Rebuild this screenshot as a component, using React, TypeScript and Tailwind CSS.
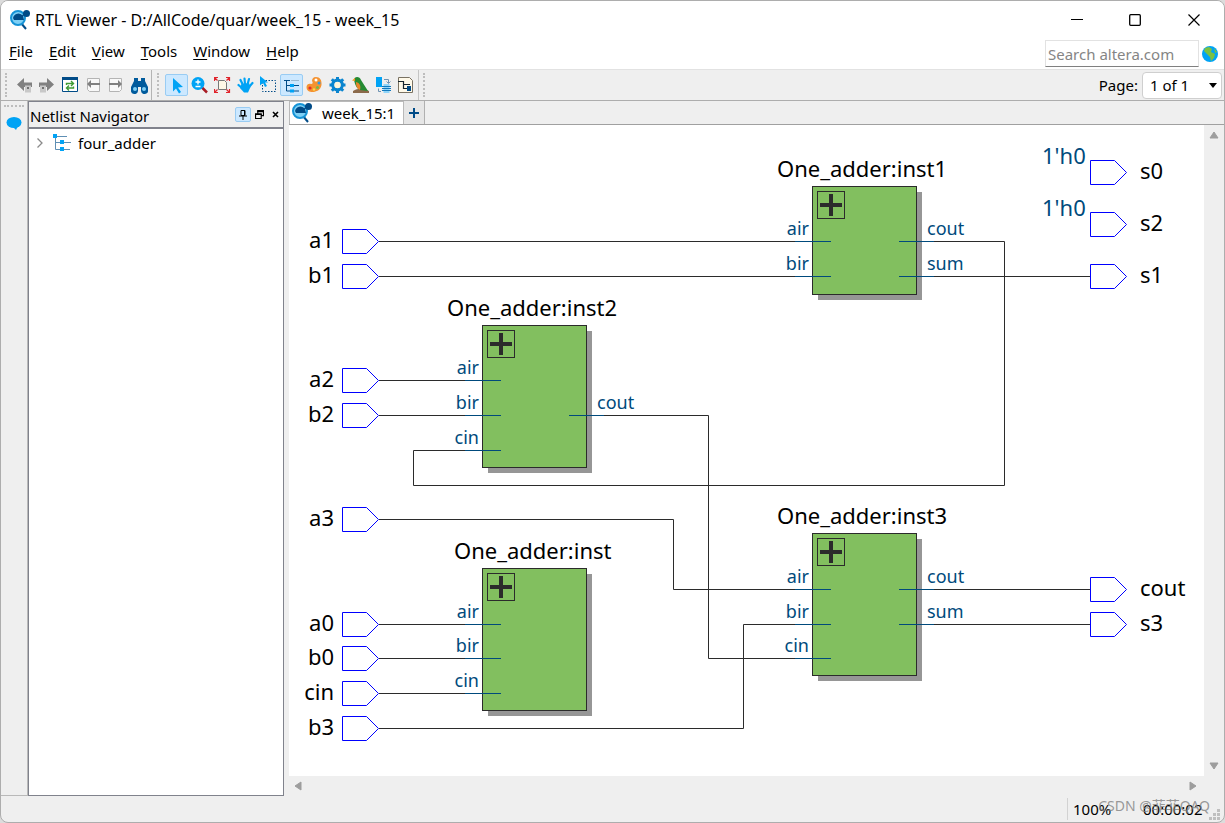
import type { ReactNode } from 'react';

const menus = ['File', 'Edit', 'View', 'Tools', 'Window', 'Help'];

function ViewerLogo() {
  return (
    <svg width="22" height="22" viewBox="0 0 22 22" aria-hidden="true">
      <path d="M12 14l5 6" stroke="#004b87" strokeWidth="2" />
      <circle cx="9" cy="9" r="7" fill="#7fd0f5" stroke="#1593d6" strokeWidth="2" />
      <path d="M4 9a5.500 5.500 0 0 1 10-2l1 4H5z" fill="#004b87" />
      <circle cx="17.500" cy="4.500" r="3.500" fill="#004b87" />
      <path d="M12 8l5-4" stroke="#004b87" strokeWidth="1.500" />
    </svg>
  );
}

function Icon({ children }: { children: ReactNode }) {
  return (
    <svg width="18" height="18" viewBox="0 0 18 18" fill="none" aria-hidden="true" className="shrink-0">
      {children}
    </svg>
  );
}

type Tool = { label: string; active?: boolean; icon: ReactNode };

const navTools: Tool[] = [
  {
    label: 'Back',
    icon: (
      <>
        <path d="M1 8.500L8 2v4.500h8v4.500H8v4z" fill="#808080" />
        <path d="M9 9.500h6v7H9z" fill="#c8c8c8" />
        <path d="M11 11h2v2h-2z" fill="#707070" />
      </>
    ),
  },
  {
    label: 'Forward',
    icon: (
      <>
        <path d="M15 8.500L8 2v4.500H0V11h8v4z" fill="#808080" />
        <path d="M1 9.500h6v7H1z" fill="#c8c8c8" />
        <path d="M3 11h2v2H3z" fill="#707070" />
      </>
    ),
  },
  {
    label: 'Refresh',
    icon: (
      <>
        <path d="M.5 1.500h15v14H.5z" fill="#fff" stroke="#004b87" />
        <path d="M0 1h16v3H0z" fill="#004b87" />
        <path d="M4.500 9V7.500H11M9 5l2.500 2.500L9 10M11.500 10.500V12H5M7 9.500L4.500 12 7 14.500" stroke="#3f9b35" strokeWidth="1.400" />
      </>
    ),
  },
  {
    label: 'Previous page',
    icon: (
      <>
        <path d="M2.500 2.500h12v13h-10l-2-2z" fill="#f8f8f8" stroke="#b4b4b4" />
        <path d="M2 8l4-4v3h9v2H6v3z" fill="#808080" />
      </>
    ),
  },
  {
    label: 'Next page',
    icon: (
      <>
        <path d="M1.500 2.500h12v11l-2 2h-10z" fill="#f8f8f8" stroke="#b4b4b4" />
        <path d="M14 8l-4-4v3H1v2h9v3z" fill="#808080" />
      </>
    ),
  },
  {
    label: 'Find',
    icon: (
      <>
        <path d="M3 2h4v3h3V2h4v3l3 6v3a3 3 0 0 1-7 1v-4H7v4a3 3 0 0 1-7-1v-3l3-6z" fill="#005a9c" />
        <circle cx="4" cy="13" r="2" fill="#7fcff5" />
        <circle cx="13" cy="13" r="2" fill="#7fcff5" />
      </>
    ),
  },
];

const viewTools: Tool[] = [
  { label: 'Select', active: true, icon: <path d="M5 2l10 9-5 .5 3 4.500-2 1.500-3-5-3 3z" fill="#00a3f5" /> },
  {
    label: 'Zoom',
    icon: (
      <>
        <path d="M11 11.500l5 5" stroke="#a81c24" strokeWidth="2.500" />
        <circle cx="7" cy="7.500" r="6.500" fill="#00a3f5" />
        <path d="M7 3.500v5M4.500 6h5M4.500 10.500h5" stroke="#fff" strokeWidth="1.300" />
      </>
    ),
  },
  {
    label: 'Fit in window',
    icon: (
      <>
        <path d="M4.500 4.500h6l2 2v7h-8z" fill="#fff7e6" stroke="#777" />
        <path d="M.5 5V1.500H4M1 2l2.500 2.500M12 1.500h3.500V5M15 2l-2.500 2.500M.5 13v3.500H4M1 16l2.500-2.500M12 16.500h3.500V13M15 16l-2.500-2.500" stroke="#e0242c" strokeWidth="1.200" />
      </>
    ),
  },
  {
    label: 'Pan',
    icon: (
      <>
        <path d="M6 9L3.500 4M8 8L7.500 2.500M10.500 8.500L12 3M12 11l3.500-4M5 12L1.500 9" stroke="#00a3f5" strokeWidth="2.200" strokeLinecap="round" />
        <path d="M4.500 8l7.500-1 1.500 4-2.500 5.500H7L3 12z" fill="#00a3f5" />
      </>
    ),
  },
  {
    label: 'Area select',
    icon: (
      <>
        <path d="M2.500 4.500h13v11h-13z" stroke="#004b87" strokeDasharray="1.500 1.500" />
        <path d="M0 0l8 6.500H5l2 3.500-2 1-2-4-3 2.500z" fill="#00a3f5" />
      </>
    ),
  },
  {
    label: 'Netlist tree',
    active: true,
    icon: (
      <>
        <path d="M1 4.500h6M3.500 5v10H7M3.500 9.500H7M10 9.500h6M10 15h6" stroke="#004b87" />
        <path d="M7 8h4v3H7zM7 13.500h4v3H7z" fill="#00a3f5" />
        <path d="M8 4.500h8" stroke="#9bb8cf" />
      </>
    ),
  },
  {
    label: 'Colors',
    icon: (
      <>
        <path d="M10 1c4 0 6 3 5.500 8-1 5-5 7-9 7-3 0-6-1-6-5 0-3 3-4 4.500-3 2 0 2-2 1-3 0-2 1-4 4-4z" fill="#f59331" />
        <circle cx="10" cy="4" r="1.500" fill="#fff" />
        <circle cx="13" cy="7" r="1.500" fill="#2d9bea" />
        <circle cx="4" cy="12" r="1.600" fill="#e02d2d" />
        <circle cx="11.500" cy="11.500" r="1.500" fill="#76b74a" />
        <circle cx="8" cy="13.500" r="1.200" fill="#f5df4d" />
      </>
    ),
  },
  {
    label: 'Settings',
    icon: (
      <>
        <circle cx="8.500" cy="9" r="4.700" stroke="#0a85cf" strokeWidth="3.400" />
        <path d="M8.500 1v3M8.500 14v3M.5 9h3M13.500 9h3M2.800 3.300L5 5.500M12 12.500l2.200 2.200M2.800 14.700L5 12.500M12 5.500l2.200-2.200" stroke="#0a85cf" strokeWidth="3" />
        <circle cx="8.500" cy="9" r="3.200" fill="#fff6dc" />
      </>
    ),
  },
  {
    label: 'Bird view',
    icon: (
      <>
        <path d="M1 15c5-3 10-3 16 0v2H1z" fill="#8b6a4b" />
        <path d="M2 4c0-4 6-4 7 0l7 11-8-1C4 12 3 8 2 4z" fill="#268b33" />
        <path d="M4 6c4 1 5 4 4 8-3-1-4-4-4-8z" fill="#e8842a" />
        <path d="M0 4.500L3 2v3z" fill="#f39a1f" />
      </>
    ),
  },
  {
    label: 'Partition',
    icon: (
      <>
        <path d="M1 1h6v10H1z" fill="#00a3f5" />
        <path d="M9 3.500h4.500V7M11.500 5.500l2 2 2-2M6 15.500H3.500V12.500" stroke="#6e93b2" />
        <path d="M8.500 8h6v9h-6z" fill="#8fd5fa" />
        <path d="M7 10.500h9M7 12.500h9M7 14.500h9" stroke="#1279bc" />
      </>
    ),
  },
  {
    label: 'Netlist page',
    icon: (
      <>
        <path d="M.5 1.500h11l3 3v12H.5z" fill="#fff9e9" stroke="#7a7262" />
        <path d="M0 5.500h5.500v7H10M12 8.500H5.500" stroke="#17252d" strokeWidth="1.200" />
        <path d="M9 10h4v5H9z" fill="#004b87" />
      </>
    ),
  },
];

function Handle() {
  return <div className="h-6 w-0 border-l-2 border-dotted border-[#bdbdbd]" />;
}

function ToolGroup({ tools }: { tools: Tool[] }) {
  return (
    <div className="flex">
      {tools.map((tool) => (
        <button
          key={tool.label}
          type="button"
          aria-label={tool.label}
          className={
            tool.active
              ? 'flex h-[22px] w-[23px] items-center justify-center rounded-xs border border-[#99ccf3] bg-[#cce8ff]'
              : 'flex h-[22px] w-[23px] items-center justify-center'
          }
        >
          <Icon>{tool.icon}</Icon>
        </button>
      ))}
    </div>
  );
}

type Block = { name: string; labelX: number; x: number; y: number; h: number; inputs: [string, number][]; outputs: [string, number][] };

const blocks: Block[] = [
  { name: 'One_adder:inst1', labelX: 777, x: 812, y: 186, h: 109, inputs: [['air', 241], ['bir', 276]], outputs: [['cout', 241], ['sum', 276]] },
  { name: 'One_adder:inst2', labelX: 447, x: 482, y: 325, h: 143, inputs: [['air', 380], ['bir', 415], ['cin', 450]], outputs: [['cout', 415]] },
  { name: 'One_adder:inst', labelX: 454, x: 482, y: 568, h: 143, inputs: [['air', 624], ['bir', 658], ['cin', 693]], outputs: [] },
  { name: 'One_adder:inst3', labelX: 777, x: 812, y: 533, h: 143, inputs: [['air', 589], ['bir', 624], ['cin', 658]], outputs: [['cout', 589], ['sum', 624]] },
];

const inputPins: [string, number][] = [
  ['a1', 241], ['b1', 276], ['a2', 380], ['b2', 415], ['a3', 519], ['a0', 624], ['b0', 658], ['cin', 693], ['b3', 728],
];

const outputPins: [string, number][] = [
  ['s0', 172], ['s2', 224], ['s1', 276], ['cout', 589], ['s3', 624],
];

const wires = [
  'M379 241.500H812',
  'M379 276.500H812',
  'M379 380.500H482',
  'M379 415.500H482',
  'M917 241.500H1004.500V485.500H413.500V450.500H482',
  'M917 276.500H1090',
  'M587 415.500H708.500V658.500H812',
  'M379 519.500H673.500V589.500H812',
  'M379 624.500H482',
  'M379 658.500H482',
  'M379 693.500H482',
  'M379 728.500H743.500V624.500H812',
  'M917 589.500H1090',
  'M917 624.500H1090',
];

function Pin({ x, y }: { x: number; y: number }) {
  return <path d={`M${x + 0.5} ${y - 11.5}h24l12 12-12 12h-24z`} fill="#fff" stroke="#0000ff" />;
}

function BlockShape({ block }: { block: Block }) {
  const { x, y, h } = block;
  return (
    <g>
      <text x={block.labelX} y={y - 9} fontSize="22" fill="#000">{block.name}</text>
      <rect x={x + 6} y={y + 6} width="104" height={h - 1} fill="#969696" />
      <rect x={x + 0.5} y={y + 0.5} width="104" height={h - 1} fill="#82bf5f" stroke="#2b2b2b" />
      <rect x={x + 5.5} y={y + 5.5} width="27" height="27" fill="none" stroke="#2b2b2b" />
      <path d={`M${x + 8} ${y + 19}h22M${x + 19} ${y + 8}v22`} stroke="#2b2b2b" strokeWidth="4" />
      {block.inputs.map(([name, py]) => (
        <g key={name}>
          <path d={`M${x - 17} ${py + 0.5}h36`} stroke="#004a7c" />
          <text x={x - 3} y={py - 6} fontSize="18" textAnchor="end" fill="#004a7c">{name}</text>
        </g>
      ))}
      {block.outputs.map(([name, py]) => (
        <g key={name}>
          <path d={`M${x + 87} ${py + 0.5}h35`} stroke="#004a7c" />
          <text x={x + 115} y={py - 6} fontSize="18" fill="#004a7c">{name}</text>
        </g>
      ))}
    </g>
  );
}

function Schematic() {
  return (
    <svg width="915" height="651" viewBox="289 125 915 651" className="shrink-0" role="img" aria-label="Four bit adder netlist">
      <g fill="none" stroke="#2b2b2b">
        {wires.map((d) => <path key={d} d={d} />)}
      </g>
      {blocks.map((block) => <BlockShape key={block.name} block={block} />)}
      {inputPins.map(([name, y]) => (
        <g key={name}>
          <Pin x={342} y={y} />
          <text x="334" y={y + 7} fontSize="22" textAnchor="end">{name}</text>
        </g>
      ))}
      {outputPins.map(([name, y]) => (
        <g key={name}>
          <Pin x={1090} y={y} />
          <text x="1140" y={y + 7} fontSize="22">{name}</text>
        </g>
      ))}
      <text x="1042" y="164" fontSize="22" fill="#004a7c">1'h0</text>
      <text x="1042" y="216" fontSize="22" fill="#004a7c">1'h0</text>
    </svg>
  );
}

export default function App() {
  return (
    <div className="h-screen bg-[#dcdcdc] font-['Noto_Sans','Noto_Sans_CJK_SC',sans-serif] text-[15px] leading-5 text-black">
      <div className="relative flex h-full flex-col overflow-hidden rounded-lg border border-[#adadad] bg-[#efefef]">
        <header className="flex h-[37px] shrink-0 items-center bg-white pl-2">
          <ViewerLogo />
          <h1 className="ml-1 flex-1 text-base leading-5">RTL Viewer - D:/AllCode/quar/week_15 - week_15</h1>
          <button type="button" aria-label="Minimize" className="flex h-full w-[58px] items-center justify-center">
            <svg width="12" height="12" viewBox="0 0 12 12"><path d="M0 5.500h12" stroke="#000" /></svg>
          </button>
          <button type="button" aria-label="Maximize" className="flex h-full w-[58px] items-center justify-center">
            <svg width="12" height="12" viewBox="0 0 12 12"><rect x=".7" y=".7" width="10.600" height="10.600" rx="1" fill="none" stroke="#000" strokeWidth="1.300" /></svg>
          </button>
          <button type="button" aria-label="Close" className="flex h-full w-[60px] items-center justify-center">
            <svg width="12" height="12" viewBox="0 0 12 12"><path d="M.5.5l11 11M11.500.5l-11 11" stroke="#000" strokeWidth="1.200" /></svg>
          </button>
        </header>

        <div className="flex h-8 shrink-0 items-center border-b border-[#e2e2e2] bg-white">
          <nav className="flex flex-1 gap-4 pb-[6px] pl-2">
            {menus.map((name) => (
              <button key={name} type="button"><span className="underline underline-offset-2">{name[0]}</span>{name.slice(1)}</button>
            ))}
          </nav>
          <input
            aria-label="Search altera.com"
            placeholder="Search altera.com"
            className="h-[27px] w-[154px] border border-[#e2e2e2] border-b-[#808080] bg-white px-[2px] placeholder:text-[#858585]"
          />
          <button type="button" aria-label="Open web site" className="mr-[6px] ml-[3px]">
            <svg width="16" height="16" viewBox="0 0 16 16">
              <circle cx="8" cy="8" r="8" fill="#00a3f5" />
              <path d="M3 2l4-1 3 2-1 3 4 2-1 4-3 3-1-4-3-3-3-3z" fill="#7ac143" />
              <path d="M12 2l3 4-2 1z" fill="#7ac143" />
            </svg>
          </button>
        </div>

        <div className="flex h-[31px] shrink-0 items-center border-b border-[#adadad]">
          <div className="flex items-center pl-1">
            <Handle />
            <div className="pl-[6px]"><ToolGroup tools={navTools} /></div>
            <div className="mr-[5px] h-[30px] w-px bg-[#b4b4b4]" />
            <Handle />
            <div className="pl-[6px]"><ToolGroup tools={viewTools} /></div>
            <div className="mr-1 h-[30px] w-px bg-[#c4c4c4]" />
            <Handle />
          </div>
          <div className="ml-auto flex items-center gap-1 pr-[2px]">
            <label htmlFor="page">Page:</label>
            <div className="relative">
              <select id="page" className="h-[27px] w-20 appearance-none rounded border border-[#cfcfcf] bg-white pl-[7px]">
                <option>1 of 1</option>
              </select>
              <svg width="8" height="5" viewBox="0 0 8 5" className="pointer-events-none absolute top-[11px] right-[5px]"><path d="M0 0h8L4 5z" /></svg>
            </div>
          </div>
        </div>

        <main className="flex min-h-0 flex-1">
          <aside className="flex w-[27px] shrink-0 flex-col items-center border-r border-b border-[#b9b9b9] pt-1">
            <div className="w-5 border-t-2 border-dotted border-[#bdbdbd]" />
            <button type="button" aria-label="Messages" className="mt-[9px]">
              <svg width="16" height="15" viewBox="0 0 16 15"><ellipse cx="8" cy="6.500" rx="7.500" ry="5.500" fill="#00a3f5" /><path d="M7 11l3 3 2-4z" fill="#00a3f5" /></svg>
            </button>
          </aside>

          <section className="flex w-[256px] shrink-0 flex-col border border-[#80828c]">
            <div className="flex h-[27px] shrink-0 items-center border-b-2 border-[#80828c] pl-px">
              <h2 className="flex-1 pt-[2px]">Netlist Navigator</h2>
              <button type="button" aria-label="Pin panel" className="flex h-[15px] w-4 items-center justify-center rounded-xs border border-[#99ccf3] bg-[#cce8ff]">
                <svg width="8" height="10" viewBox="0 0 8 10"><path d="M2 .5h4v5H2zM0 6h8M4 6v4M5.500 1v5" fill="none" stroke="#000" /></svg>
              </button>
              <button type="button" aria-label="Float panel" className="flex w-4 justify-center">
                <svg width="9" height="9" viewBox="0 0 8 8"><path d="M2.500 3V1h5v4H6M.5 3.500h5v4h-5z" fill="none" stroke="#000" /><path d="M2 0h6v2H2zM0 3h6v1.500H0z" /></svg>
              </button>
              <button type="button" aria-label="Close panel" className="flex w-4 justify-center">
                <svg width="7" height="7" viewBox="0 0 7 7"><path d="M1 1l5 5M6 1L1 6" stroke="#000" strokeWidth="1.600" /></svg>
              </button>
            </div>
            <div className="flex-1 bg-white pt-1 pl-2">
              <button type="button" className="flex items-center">
                <svg width="6" height="10" viewBox="0 0 6 10" fill="none"><path d="M.5.5L5 5 .5 9.500" stroke="#8a8a8a" strokeWidth="1.300" /></svg>
                <svg width="20" height="18" viewBox="0 0 20 18" fill="none" className="mr-[6px] ml-[9px]">
                  <path d="M3.500 2v13.500H8M3.500 8.500H8M5 2.500h10M10 8.500h9M10 15.500h8" stroke="#5f8fb4" />
                  <path d="M1 0h4v4H1zM8 6h4v4H8zM8 13h4v4H8z" fill="#00a3f5" />
                </svg>
                <span>four_adder</span>
              </button>
            </div>
          </section>

          <section className="ml-[5px] flex min-w-0 flex-1 flex-col">
            <div className="flex h-6 shrink-0 border-b border-[#a0a0a0]">
              <button type="button" className="flex w-[115px] items-center gap-[9px] border-x border-t border-[#b9b9b9] bg-white pl-px">
                <ViewerLogo />
                <span>week_15:1</span>
              </button>
              <button type="button" aria-label="New tab" className="flex w-[21px] items-center justify-center border-r border-[#b0b0b0] bg-[#e6e6e6]">
                <svg width="10" height="10" viewBox="0 0 10 10"><path d="M5 0v10M0 5h10" stroke="#004b87" strokeWidth="2" /></svg>
              </button>
            </div>
            <div className="flex min-h-0 flex-1">
              <div className="min-w-0 flex-1 overflow-hidden bg-white"><Schematic /></div>
              <div className="flex w-5 shrink-0 flex-col items-center justify-between py-[6px]">
                <svg width="10" height="8" viewBox="0 0 10 8"><path d="M1 7l4-6 4 6z" fill="#9d9d9d" stroke="#9d9d9d" strokeLinejoin="round" /></svg>
                <svg width="10" height="8" viewBox="0 0 10 8"><path d="M1 1l4 6 4-6z" fill="#9d9d9d" stroke="#9d9d9d" strokeLinejoin="round" /></svg>
              </div>
            </div>
            <div className="flex h-5 shrink-0 items-center justify-between pr-[27px] pl-[5px]">
              <svg width="8" height="10" viewBox="0 0 8 10"><path d="M7 1L1 5l6 4z" fill="#9d9d9d" stroke="#9d9d9d" strokeLinejoin="round" /></svg>
              <svg width="8" height="10" viewBox="0 0 8 10"><path d="M1 1l6 4-6 4z" fill="#9d9d9d" stroke="#9d9d9d" strokeLinejoin="round" /></svg>
            </div>
          </section>
        </main>

        <footer className="flex h-[26px] shrink-0 items-end justify-end">
          <div className="flex h-[22px] items-center self-center border-l border-[#d2d2d2] pl-[5px]">
            <span className="w-[70px]">100%</span>
            <span className="w-[65px]">00:00:02</span>
          </div>
          <svg width="16" height="16" viewBox="0 0 16 16" fill="#bfbfbf"><path d="M9 3h3v3H9zM5 7h3v3H5zM9 7h3v3H9zM1 11h3v3H1zM5 11h3v3H5zM9 11h3v3H9z" /></svg>
        </footer>
        <span className="pointer-events-none absolute right-[14px] bottom-[6px] text-sm text-[#808080]/80">CSDN @菲菲QAQ</span>
      </div>
    </div>
  );
}
